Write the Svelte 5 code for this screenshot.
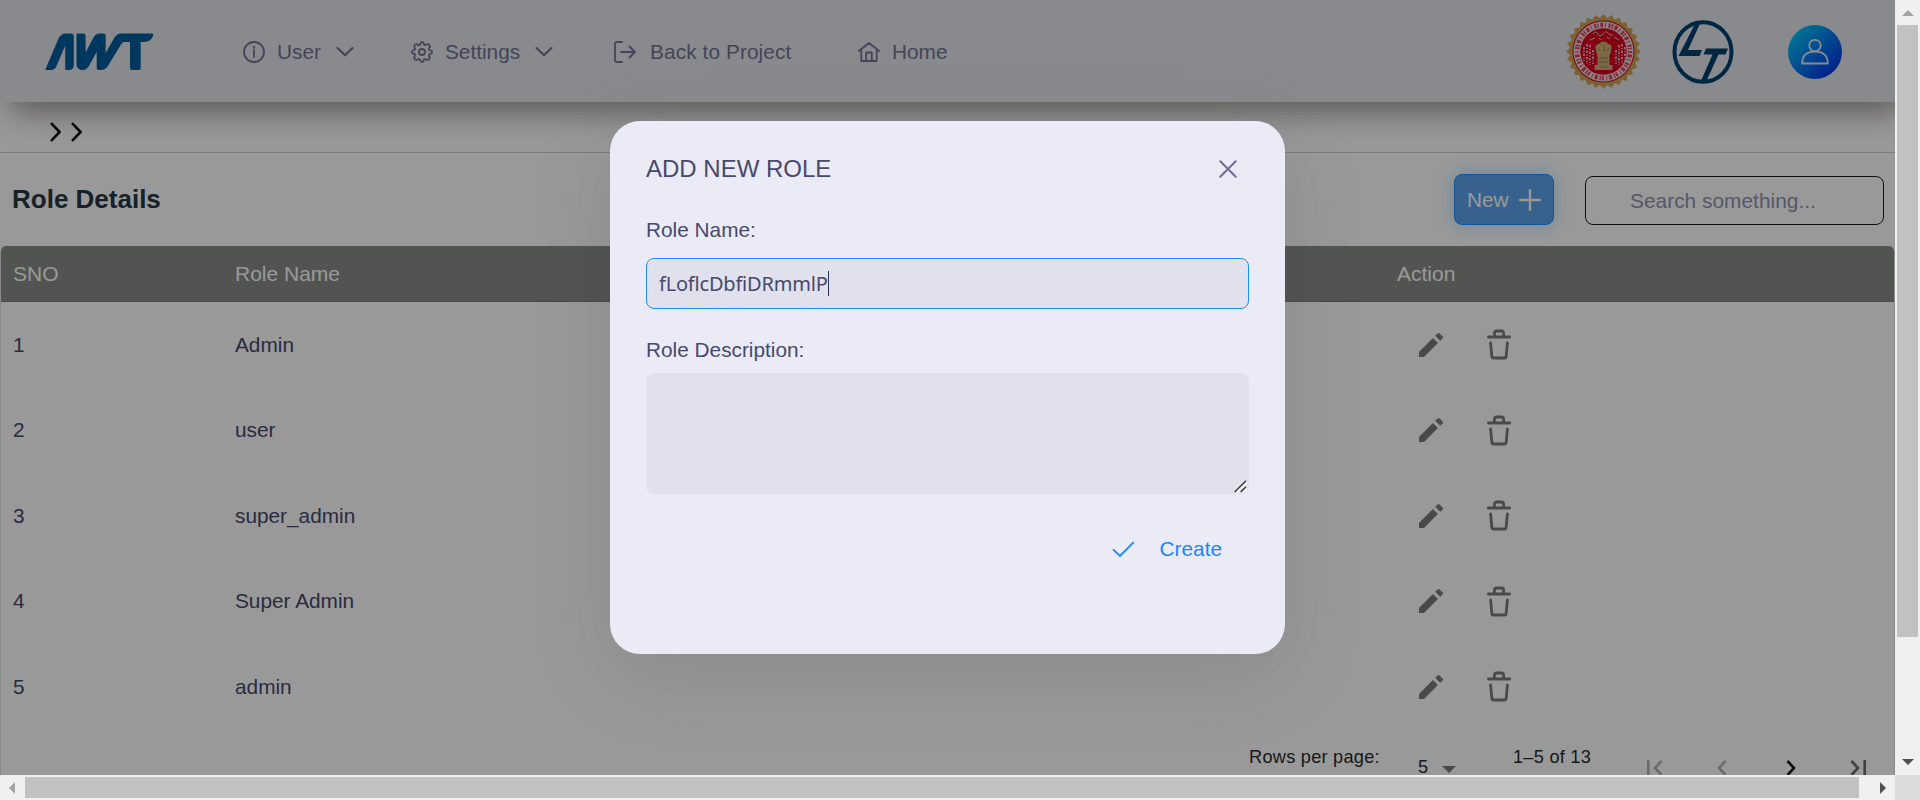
<script>
  const rows = [
    { sno: 1, name: 'Admin' },
    { sno: 2, name: 'user' },
    { sno: 3, name: 'super_admin' },
    { sno: 4, name: 'Super Admin' },
    { sno: 5, name: 'admin' }
  ];

  // Toothed outline of the seal
  const teeth = 28;
  const sealPoints = Array.from({ length: teeth * 2 }, (_, i) => {
    const r = i % 2 ? 33.6 : 37.4;
    const a = (i * Math.PI) / teeth - Math.PI / 2;
    return `${(37.5 + r * Math.cos(a)).toFixed(1)},${(37.5 + r * Math.sin(a)).toFixed(1)}`;
  }).join(' ');

  let roleName = $state('fLoflcDbfiDRmmlP');
</script>

<div class="window">
  <div class="viewport">
    <header>
      <svg class="logo" viewBox="0 0 109 38" width="109" height="38">
        <g fill="#005c9e">
          <path d="M0.5 36.2L13.5 5.5Q16 0.6 21 0.6H26Q28.8 0.6 28.8 3.5V32Q28.8 37 24 37H21.5Q20.2 37 20.2 35.5V12.5L11.5 33Q10 37 6 37H1Q0 37 .5 36.2Z" />
          <path d="M32.3 0.6H38.5Q40.6 0.6 40.6 3V19.5L48.5 4.5Q50.8 0.6 54.5 0.6H58.5Q60.7 0.6 60.7 3V20L69.5 4.5Q72 0.6 76.5 0.6H107Q108.8 0.6 108.2 2.5Q106 9 99.5 9H95.7V35Q95.7 37 93.7 37H87Q85 37 85 35V9H79.5Q77.5 9 76.3 11L62.8 33.3Q60.5 37 56 37H53.5Q51.7 37 51.7 35V19L43.8 33.3Q41.5 37 38 37Q31.5 37 31.5 31V2Q31.5 0.6 32.3 0.6Z" />
        </g>
      </svg>
      <nav>
        <a class="user">
          <svg viewBox="0 0 22 22" width="22" height="22"><circle cx="11" cy="11" r="10" /><path d="M11 9.2V16M11 5.6v1.5" /></svg>
          <span>User</span>
          <svg class="chev" viewBox="0 0 18 10" width="18" height="10"><path d="M1.5 1L9 8.3 16.5 1" /></svg>
        </a>
        <a class="settings">
          <svg viewBox="0 0 22 22" width="22" height="22">
            <path d="M9.3 2.8Q9.500 .9 11 .9T12.700 2.800Q13 4 14.300 4.200L15.300 3.500Q17 2.600 18.300 3.900T18.300 6.800Q17.500 8.200 18.200 9L19.500 9.400Q21.100 9.700 21.100 11.200T19.500 12.900Q18 13.200 17.800 14.300L18.300 15.300Q19.400 17 18.200 18.200T15.200 18.400Q13.800 17.700 12.900 18.400L12.700 19.400Q12.400 21.100 11 21.100T9.300 19.400Q9 17.900 7.700 17.900L6.700 18.500Q5 19.400 3.800 18.200T3.600 15.200Q4.400 13.800 3.800 13L2.500 12.700Q.9 12.400 .9 11T2.500 9.300Q4 9 4.200 7.700L3.600 6.700Q2.700 5 3.900 3.800T6.800 3.600Q8.200 4.400 9 3.800Z" />
            <circle cx="11" cy="11" r="3" />
          </svg>
          <span>Settings</span>
          <svg class="chev" viewBox="0 0 18 10" width="18" height="10"><path d="M1.5 1L9 8.3 16.5 1" /></svg>
        </a>
        <a class="back">
          <svg viewBox="0 0 22 22" width="22" height="22"><path d="M8 1H3Q1 1 1 3V19Q1 21 3 21H8M7 11H21M15.500 5.500L21 11l-5.500 5.500" /></svg>
          <span>Back to Project</span>
        </a>
        <a class="home">
          <svg viewBox="0 0 22 22" width="22" height="22"><path d="M.800 10L11 2l10.200 8M3.300 8.500V20H18.700V8.500M8.200 20V11.500H13.800V20" /></svg>
          <span>Home</span>
        </a>
      </nav>
      <div class="brands">
        <svg class="seal" viewBox="0 0 75 75" width="75" height="75">
          <polygon points={sealPoints} fill="#cfa355" />
          <circle cx="37.5" cy="37.5" r="31" fill="#d8001f" />
          <circle cx="37.5" cy="37.5" r="30" fill="#ecd9de" />
          <circle cx="37.5" cy="37.500" r="26.500" fill="none" stroke="#d8001f" stroke-width="4.600" stroke-dasharray="1.400 1.800 3 2 .9 2.600 2 1" opacity=".7" />
          <circle cx="37.5" cy="37.5" r="23.200" fill="#d8001f" />
          <g fill="none" stroke="#f0dde2" stroke-width="1.500" stroke-dasharray="2.500 1.600 1 1.400">
            <path d="M18 33v14M21 30v20M24 31v20M27 36v14M50 36v14M53 31v20M56 30v20M59 33v14" />
          </g>
          <g fill="none" stroke="#f0bcc8" stroke-width="1">
            <path d="M27 20q3-4 5 0t5 0 5-1 5 2M24 26l5-2M48 23l5 3M33 24l2 2M41 23l3 2" />
          </g>
          <path d="M29.500 34Q29 30 33 30Q34 27.500 37.500 27.500T42 30Q46 30 45.500 34L44.500 39 43.500 42V51H46.500V56H28.500V51H31.500V42L30.500 39Z" fill="#cfae72" />
          <path d="M32 34l2 3M38 31v6M43 34l-2 3M33 44h9M33 48h9M34 53h7" stroke="#9c8252" stroke-width="1" fill="none" />
        </svg>
        <svg class="lt" viewBox="0 0 62 64" width="62" height="64">
          <ellipse cx="31" cy="32" rx="28.500" ry="29.800" fill="none" stroke="#00406f" stroke-width="4" />
          <path d="M23 4L28.500 2.500 16 30H30L27.500 36H6.500Z" fill="#00406f" />
          <path d="M34 28.500H56L53.500 34.500H46.500L34 62H28.500L40.500 34.500H31.500Z" fill="#00406f" />
        </svg>
        <div class="avatar">
          <svg viewBox="0 0 28 28" width="28" height="28"><circle cx="14" cy="7.500" r="5.700" /><path d="M1.200 25.500Q1.200 13.600 14 13.600T26.800 25.500Z" /></svg>
        </div>
      </div>
    </header>

    <div class="crumbs">
      <svg viewBox="0 0 12 20" width="12" height="20"><path d="M1.800 1.800L9.600 10 1.800 18.200" /></svg>
      <svg viewBox="0 0 12 20" width="12" height="20"><path d="M1.800 1.800L9.600 10 1.800 18.200" /></svg>
    </div>

    <div class="toolbar">
      <h1>Role Details</h1>
      <button class="new">New <svg viewBox="0 0 22 22" width="22" height="22"><path d="M11 1.200v19.600M1.200 11h19.600" /></svg></button>
      <input class="search" placeholder="Search something..." />
    </div>

    <div class="table">
      <div class="row head"><span>SNO</span><span>Role Name</span><span>Action</span></div>
      {#each rows as row}
        <div class="row">
          <span>{row.sno}</span>
          <span>{row.name}</span>
          <span class="actions">
            <svg viewBox="0 0 24 24" width="32" height="32"><path fill="#7a7a7a" d="M3 17.250V21h3.750L17.200 10.550l-3.750-3.750L3 17.250zM20.710 7.040c.39-.39.39-1.020 0-1.410l-2.340-2.340a.996.996 0 0 0-1.410 0l-1.830 1.830 3.750 3.750 1.830-1.830z" /></svg>
            <svg class="trash" viewBox="0 0 24 31" width="24" height="31"><path d="M1.400 8H22.600M7.400 7V4.500Q7.400 2 9.500 2H14.500Q16.600 2 16.600 4.500V7M3.600 13.800L4.800 27Q5 29 6.500 29H17.500Q19 29 19.200 27L20.400 13.800" /></svg>
          </span>
        </div>
      {/each}
      <div class="pager">
        <span class="rpp">Rows per page:</span>
        <span class="size">5</span>
        <svg class="caret" viewBox="0 0 14 7" width="14" height="7"><path d="M0 0H14L7 7Z" fill="#7a7a7a" /></svg>
        <span class="range">1–5 of 13</span>
        <svg class="first" viewBox="0 0 16 16" width="16" height="16"><path d="M1.300 0V16M14.500 1L8 8l6.500 7" /></svg>
        <svg class="prev" viewBox="0 0 10 16" width="10" height="16"><path d="M8.500 1L2 8l6.500 7" /></svg>
        <svg class="next" viewBox="0 0 10 16" width="10" height="16"><path d="M1.500 1L8 8l-6.500 7" /></svg>
        <svg class="last" viewBox="0 0 16 16" width="16" height="16"><path d="M14.700 0V16M1.500 1L8 8l-6.500 7" /></svg>
      </div>
    </div>

    <div class="overlay">
      <div class="modal">
        <div class="title">
          <span>ADD NEW ROLE</span>
          <svg viewBox="0 0 18 18" width="18" height="18"><path d="M1.300 1.300L16.700 16.700M16.700 1.300L1.300 16.700" /></svg>
        </div>
        <div class="label">Role Name:</div>
        <div class="field"><span>{roleName}</span><i></i></div>
        <div class="label desc">Role Description:</div>
        <div class="area">
          <svg viewBox="0 0 13 13" width="13" height="13"><path d="M2.500 13L13 2.500M8.500 13L13 8.500" stroke="#fff" /><path d="M.7 12L12 .7M6.700 12L12 6.700" stroke="#3d3d44" /></svg>
        </div>
        <div class="create">
          <svg viewBox="0 0 23 17" width="23" height="17"><path d="M1.500 8.800L8 15 21.300 1.700" /></svg>
          <span>Create</span>
        </div>
      </div>
    </div>
  </div>

  <div class="vbar">
    <svg viewBox="0 0 12 6" width="12" height="6"><path d="M6 0L12 6H0Z" fill="#a3a3a3" /></svg>
    <div class="vthumb"></div>
    <svg class="down" viewBox="0 0 12 6" width="12" height="6"><path d="M0 0H12L6 6Z" fill="#505050" /></svg>
  </div>
  <div class="hbar">
    <svg viewBox="0 0 6 12" width="6" height="12"><path d="M6 0V12L0 6Z" fill="#a3a3a3" /></svg>
    <div class="hthumb"></div>
    <svg viewBox="0 0 6 12" width="6" height="12"><path d="M0 0V12L6 6Z" fill="#505050" /></svg>
  </div>
  <div class="corner"></div>
</div>

<style>
  :global(body) { margin: 0; background: #fff; }
  .window, .window * { box-sizing: border-box; }
  .window {
    display: grid;
    grid-template: 775px 25px / 1895px 25px;
    width: 1920px;
    height: 800px;
    overflow: hidden;
    font: 20.8px/24px "Liberation Sans", Arial, sans-serif;
    color: #47496d;
  }
  svg { display: block; flex: none; }
  .viewport { position: relative; overflow: hidden; background: #fff; }

  header {
    display: flex;
    align-items: center;
    width: 1912px;
    height: 102px;
    padding: 1px 17px 0 45px;
    background: #e4e6eb;
    box-shadow: 0 20px 30px -10px rgba(57, 50, 42, .5);
    color: #707296;
  }
  nav { display: flex; align-items: center; margin-left: 89px; }
  nav a { display: flex; align-items: center; }
  nav svg { fill: none; stroke: #707296; stroke-width: 1.8; stroke-linecap: round; stroke-linejoin: round; }
  nav span { position: relative; top: .5px; margin-left: 12px; white-space: nowrap; }
  nav .chev { margin-left: 15px; stroke-width: 2.2; }
  .user { width: 168px; }
  .settings { width: 203px; }
  .back { width: 244px; }
  .back span { margin-left: 14px; letter-spacing: .1px; }
  .brands { display: flex; align-items: center; margin: 0 53px 0 auto; }
  .lt { margin: 0 1px 0 31px; }
  .seal { margin-left: -1px; }
  .avatar {
    display: flex; align-items: center; justify-content: center;
    width: 54px; height: 54px; margin-left: 53px;
    border-radius: 50%;
    background: linear-gradient(135deg, #00d8f8 0%, #0030e6 90%);
  }
  .avatar svg { fill: none; stroke: #dfe8fa; stroke-width: 1.8; stroke-linejoin: round; }

  .crumbs { display: flex; gap: 9px; height: 51px; padding: 20px 0 0 50px; border-bottom: 1px solid #cfcfcf; }
  .crumbs svg { fill: none; stroke: #111; stroke-width: 2.6; stroke-linecap: round; stroke-linejoin: round; }

  .toolbar { display: flex; align-items: center; height: 93px; padding: 0 11px 0 12px; }
  h1 { margin: 0 auto 2px 0; font-size: 26px; line-height: 30px; color: #283742; }
  .new {
    display: flex; align-items: center; gap: 10px;
    width: 100px; height: 51px; padding: 0 0 0 12px;
    border: 1px solid #1890ff; border-radius: 8px;
    background: #5ca3ec;
    box-shadow: 0 0 20px rgba(24, 144, 255, .3);
    color: #fff; font: inherit;
  }
  .new svg { stroke: #fff; stroke-width: 2.4; stroke-linecap: round; }
  .search {
    width: 299px; height: 49px; margin: 2px 0 0 31px; padding: 0 0 0 44px;
    border: 1px solid #1c1c1c; border-radius: 8px;
    background: transparent; font: inherit; letter-spacing: .05px;
  }
  .search::placeholder { color: #8f91ae; opacity: 1; }

  .table { border: solid #e4e4e4; border-width: 0 1px; border-radius: 6px 6px 0 0; overflow: hidden; }
  .row { display: grid; grid-template-columns: 222px 1162px 1fr; align-items: center; height: 85.5px; padding-left: 12px; }
  .head { height: 56px; background: #898c89; border-bottom: 1px solid #7b7d7b; color: #fff; font-size: 21px; }
  .actions { display: flex; align-items: center; padding-left: 18px; }
  .trash { margin-left: 40px; fill: none; stroke: #7a7a7a; stroke-width: 2.8; stroke-linecap: round; stroke-linejoin: round; }

  .pager { display: flex; align-items: flex-start; height: 60px; padding: 16px 0 0 1248px; font-size: 18.2px; line-height: 22px; letter-spacing: .25px; color: #2a2a2a; }
  .pager span { white-space: nowrap; }
  .rpp { width: 169px; }
  .size { width: 24px; margin-top: 10px; }
  .caret { margin-top: 20px; }
  .range { width: 134px; margin-left: 57px; }
  .pager svg:not(.caret) { margin-top: 14px; fill: none; stroke-width: 2.6; }
  .first, .prev { stroke: #b4b4b4; }
  .prev { margin-left: 54px; }
  .next { margin-left: 59px; stroke: #1c1c1c; }
  .last { margin-left: 54px; stroke: #6c6c6c; }

  .overlay {
    position: absolute; inset: 0;
    display: flex; align-items: center; justify-content: center;
    background: rgba(0, 0, 0, .4);
  }
  .modal {
    display: flex; flex-direction: column;
    width: 675px; height: 533px; padding: 34px 36px 0;
    border-radius: 30px;
    background: #ebebf7;
    box-shadow: 0 20px 80px rgba(60, 60, 65, .15);
  }
  .title { display: flex; align-items: center; justify-content: space-between; height: 28px; padding-right: 12px; font-size: 24px; line-height: 28px; }
  .title svg { stroke: #6c6e94; stroke-width: 2; stroke-linecap: round; }
  .label { margin-top: 35px; }
  .field {
    display: flex; align-items: center;
    height: 51px; margin-top: 16px; padding-left: 12px;
    border: 1px solid #1890ff; border-radius: 8px;
    background: #e1e0ed;
    font-family: "Noto Sans", sans-serif; font-size: 20px; letter-spacing: -.2px;
  }
  .field i { width: 1px; height: 25px; background: #303258; }
  .desc { margin-top: 29px; }
  .area { display: flex; align-items: flex-end; justify-content: flex-end; height: 121px; margin-top: 11px; padding: 0 2px 1px 0; border-radius: 8px; background: #e1e0ed; }
  .area svg { fill: none; stroke-width: 1.5; }
  .create { display: flex; align-items: center; justify-content: flex-end; gap: 25px; margin-top: 43px; padding-right: 27px; color: #1a85ff; }
  .create svg { fill: none; stroke: #1a85ff; stroke-width: 1.8; stroke-linecap: round; }

  .vbar { display: flex; flex-direction: column; align-items: center; padding: 10px 0; background: #f0f0f0; }
  .vthumb { width: 21px; height: 612px; margin-top: 9px; background: #c1c1c1; }
  .down { margin-top: auto; }
  .hbar { display: flex; align-items: center; padding-left: 9px; background: #f0f0f0; }
  .hthumb { width: 1834px; height: 21px; margin: 0 21px 0 10px; background: #c1c1c1; }
  .corner { background: #dcdcdc; }
</style>
